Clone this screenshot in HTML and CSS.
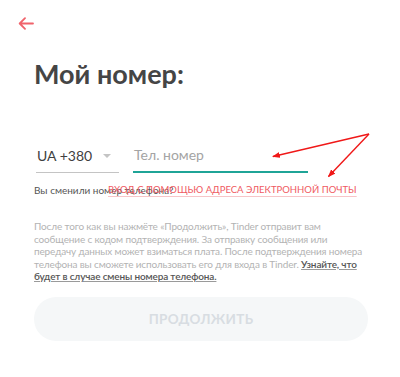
FILE: index.html
```html
<!DOCTYPE html>
<html lang="ru">
<head>
<meta charset="utf-8">
<link rel="stylesheet" href="styles.css">
</head>
<body>
<div class="page">
  <header class="top">
    <svg class="back" width="16" height="13" viewBox="0 0 16 13" aria-label="Назад">
      <path d="M15 6.5H2M7 1.2L1.7 6.5L7 11.8" fill="none" stroke="#f0636b" stroke-width="1.8" stroke-linecap="round" stroke-linejoin="round"/>
    </svg>
  </header>
  <main class="content">
    <h1 class="title">Мой номер:</h1>
    <div class="phone-row">
      <div class="country">
        <span>UA +380</span>
        <span class="caret"></span>
      </div>
      <div class="number">Тел. номер</div>
    </div>
    <div class="help">
      <span class="changed">Вы сменили номер телефона?</span>
      <a class="email-link">ВХОД С ПОМОЩЬЮ АДРЕСА ЭЛЕКТРОННОЙ ПОЧТЫ</a>
    </div>
    <p class="note">После того как вы нажмёте «Продолжить», Tinder отправит вам<br>сообщение с кодом подтверждения. За отправку сообщения или<br>передачу данных может взиматься плата. После подтверждения номера<br>телефона вы сможете использовать его для входа в Tinder. <a class="more">Узнайте, что<br>будет в случае смены номера телефона.</a></p>
    <button class="continue">ПРОДОЛЖИТЬ</button>
  </main>
  <svg class="annot" width="400" height="377" viewBox="0 0 400 377">
    <defs>
      <marker id="ah" markerWidth="8" markerHeight="6" refX="7" refY="3" orient="auto" markerUnits="userSpaceOnUse">
        <path d="M0 0L8 3L0 6Z" fill="#f01818"/>
      </marker>
    </defs>
    <line x1="369" y1="134" x2="273" y2="156.5" stroke="#f01818" stroke-width="1.4" marker-end="url(#ah)"/>
    <line x1="369" y1="134" x2="328.5" y2="176.5" stroke="#f01818" stroke-width="1.4" marker-end="url(#ah)"/>
  </svg>
</div>
</body>
</html>
```
FILE: styles.css
```css
* { box-sizing: border-box; }
html, body { margin: 0; padding: 0; background: #fff; }
body { font-family: Lato, "Open Sans", sans-serif; color: #424242; }
.page { position: relative; width: 400px; height: 377px; overflow: hidden; }
.top { padding: 17px 0 0 18px; height: 36px; }
.back { display: block; }
.content { padding: 0 30px 0 34px; }
.title { margin: 22px 0 0; font-size: 27px; font-weight: 700; line-height: 32px; color: #454545; }
.phone-row { display: flex; gap: 14px; margin-top: 56px; align-items: flex-end; }
.country { width: 83px; margin-left: 2px; height: 26px; border-bottom: 1px solid #c4c4c4; display: flex; align-items: flex-start; font-size: 14px; color: #3f3f3f; padding-left: 1px; line-height: 18px; }
.caret { margin: 7px 0 0 11px; width: 0; height: 0; border-left: 4px solid transparent; border-right: 4px solid transparent; border-top: 4px solid #c4c4c4; }
.number { width: 175px; height: 27px; border-bottom: 2px solid #1fa497; font-size: 14px; color: #a4a4a4; line-height: 18px; padding-left: 1px; }
.help { display: grid; margin-top: 10px; font-size: 10px; line-height: 14px; white-space: nowrap; }
.changed, .email-link { grid-area: 1 / 1; }
.changed { color: #555; }
.email-link { margin-left: 74px; font-size: 9.5px; color: #ef5a62; text-decoration: underline; text-decoration-color: #f7c5c8; text-underline-offset: 3px; }
.note { margin: 23px 0 0; font-size: 10px; line-height: 12.5px; color: #b3b3b3; letter-spacing: -0.15px; white-space: nowrap; }
.more { color: #555; text-decoration: underline; text-decoration-color: #9a9a9a; font-weight: 600; }
.continue { display: block; width: 334px; height: 44px; margin-top: 14px; border: 0; border-radius: 22px; background: #f5f7f8; color: #d8dde2; font-family: inherit; font-weight: 700; font-size: 13.5px; letter-spacing: 0.3px; }
.annot { position: absolute; left: 0; top: 0; pointer-events: none; }
```
